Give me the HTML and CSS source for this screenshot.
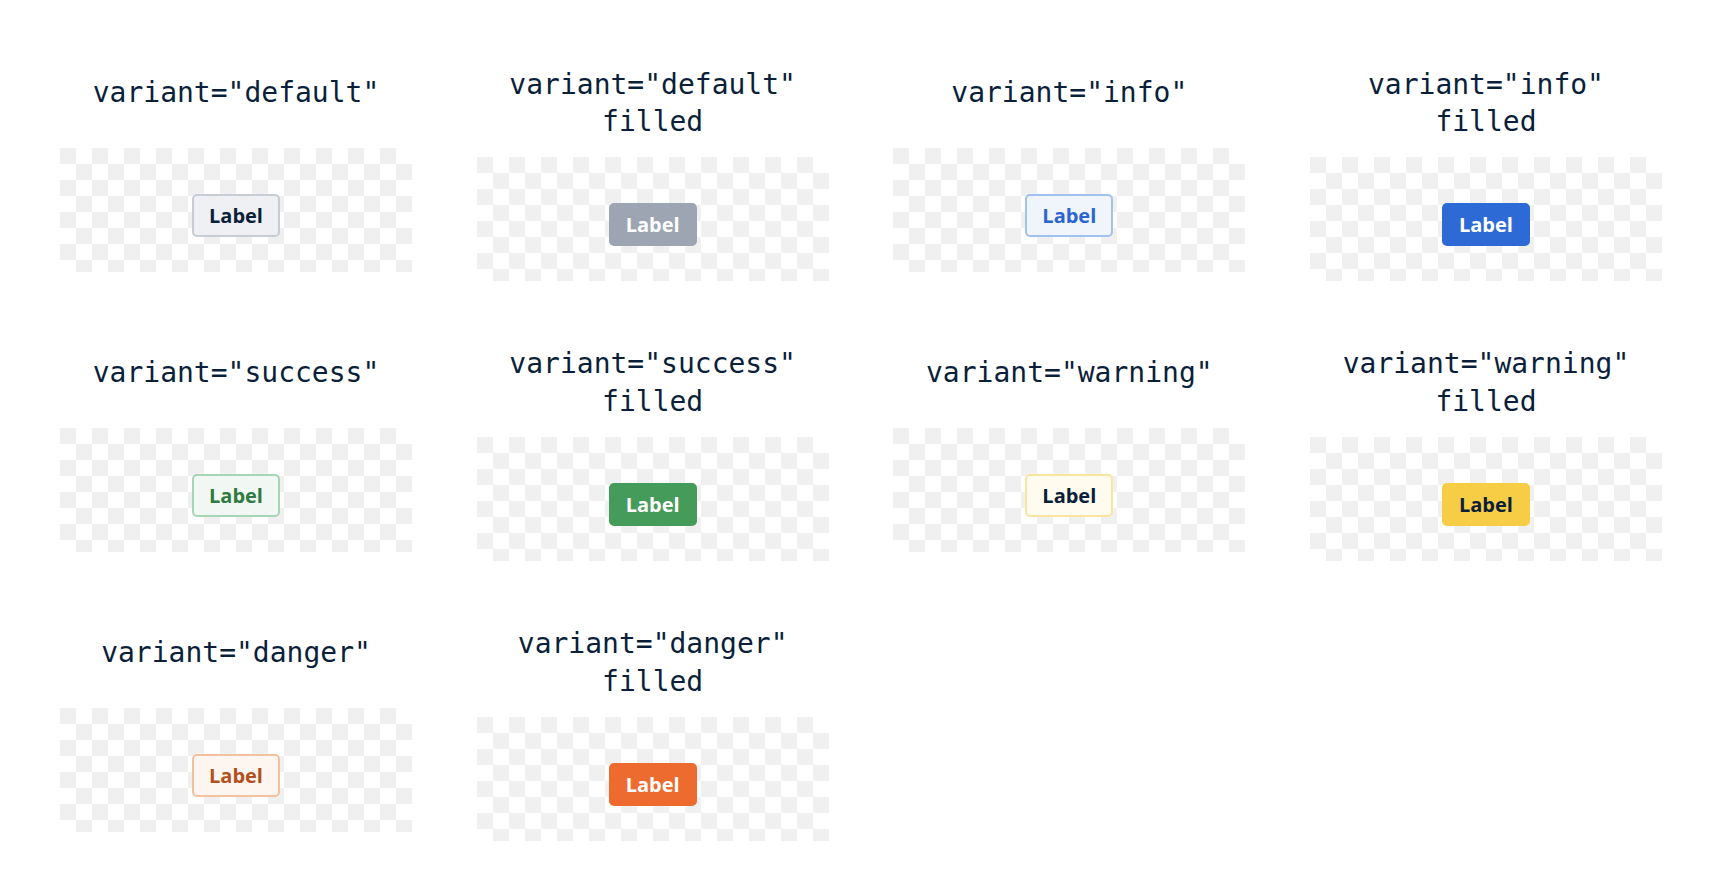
FILE: index.html
```html
<!DOCTYPE html>
<html lang="en">
<head>
  <meta charset="UTF-8" />
  <meta name="viewport" content="width=device-width, initial-scale=1" />
  <title>Badge variants</title>
  <link rel="stylesheet" href="styles.css">
</head>
<body>
  <div class="grid">
    <div class="cell">
      <div class="title">variant="default"</div>
      <div class="preview"><span class="badge default">Label</span></div>
    </div>
    <div class="cell">
      <div class="title">variant="default"<br>filled</div>
      <div class="preview"><span class="badge default filled">Label</span></div>
    </div>
    <div class="cell">
      <div class="title">variant="info"</div>
      <div class="preview"><span class="badge info">Label</span></div>
    </div>
    <div class="cell">
      <div class="title">variant="info"<br>filled</div>
      <div class="preview"><span class="badge info filled">Label</span></div>
    </div>

    <div class="cell">
      <div class="title">variant="success"</div>
      <div class="preview"><span class="badge success">Label</span></div>
    </div>
    <div class="cell">
      <div class="title">variant="success"<br>filled</div>
      <div class="preview"><span class="badge success filled">Label</span></div>
    </div>
    <div class="cell">
      <div class="title">variant="warning"</div>
      <div class="preview"><span class="badge warning">Label</span></div>
    </div>
    <div class="cell">
      <div class="title">variant="warning"<br>filled</div>
      <div class="preview"><span class="badge warning filled">Label</span></div>
    </div>

    <div class="cell">
      <div class="title">variant="danger"</div>
      <div class="preview"><span class="badge danger">Label</span></div>
    </div>
    <div class="cell">
      <div class="title">variant="danger"<br>filled</div>
      <div class="preview"><span class="badge danger filled">Label</span></div>
    </div>
  </div>
</body>
</html>
```

FILE: styles.css
```css
body {
  margin: 0;
  background: #fff;
  color: #0b1f3a;
}
.grid {
  display: grid;
  grid-template-columns: repeat(4, 352px);
  column-gap: 64.67px;
  row-gap: 64.4px;
  align-items: center;
  padding: 65.5px 0 0 60px;
}
.cell {
  display: flex;
  flex-direction: column;
  gap: 16px;
}
.title {
  min-height: 58px;
  font-family: "DejaVu Sans Mono", monospace;
  font-size: 28px;
  line-height: 1.35;
  text-align: center;
  color: #0b1f3a;
}
.preview {
  box-sizing: border-box;
  height: 124px;
  padding-top: 46px;
  display: flex;
  justify-content: center;
  align-items: flex-start;
  background: repeating-conic-gradient(#fff 0 25%, #f0f0f0 0 50%) 0 0 / 32px 32px;
}
.badge {
  display: inline-block;
  box-sizing: border-box;
  height: 43px;
  padding: 0 15px;
  font-family: "Open Sans", "Noto Sans", sans-serif;
  font-size: 20px;
  font-weight: 700;
  line-height: 39px;
  border: 2px solid transparent;
  border-radius: 5px;
}

.default { background: #eef0f3; border-color: #c8cdd5; color: #0b1f3a; }
.default.filled { background: #9da5b2; border-color: #9da5b2; color: #fff; }
.info { background: #f0f5fc; border-color: #a2c1ee; color: #2b66d0; }
.info.filled { background: #2d6ad5; border-color: #2d6ad5; color: #fff; }
.success { background: #f1f8f3; border-color: #a6d6b5; color: #2f7a40; }
.success.filled { background: #459b59; border-color: #459b59; color: #fff; }
.warning { background: #fffcef; border-color: #f8e5a0; color: #0b1f3a; }
.warning.filled { background: #f7cd45; border-color: #f7cd45; color: #0b1f3a; }
.danger { background: #fdf5f0; border-color: #f3c19f; color: #b2501e; }
.danger.filled { background: #ed6b2f; border-color: #ed6b2f; color: #fff; }
```
